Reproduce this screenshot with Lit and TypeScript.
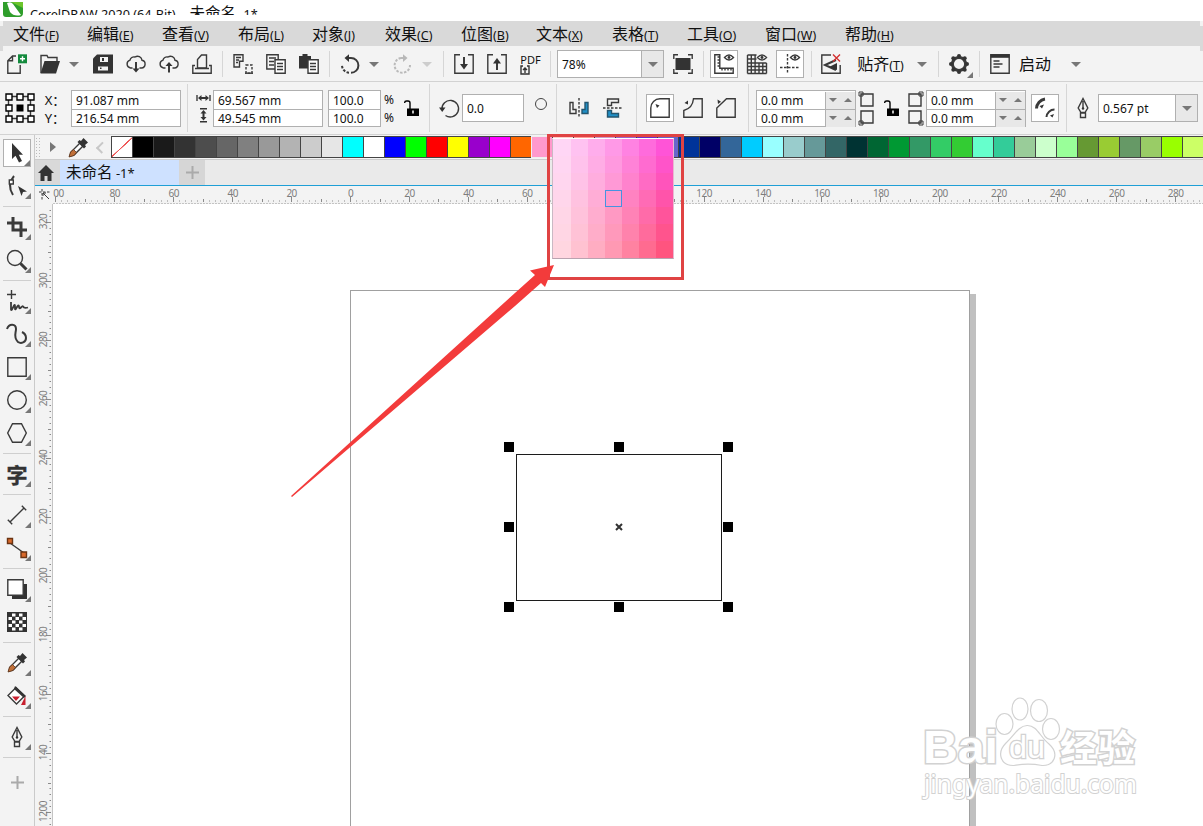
import { css, html, LitElement, svg, type SVGTemplateResult } from "lit";
import { customElement, property } from "lit/decorators.js";
import { classMap } from "lit/directives/class-map.js";
import { styleMap } from "lit/directives/style-map.js";


const MENUS: [string, string][] = [
    ["文件", "F"], ["编辑", "E"], ["查看", "V"], ["布局", "L"], ["对象", "J"], ["效果", "C"],
    ["位图", "B"], ["文本", "X"], ["表格", "T"], ["工具", "O"], ["窗口", "W"], ["帮助", "H"],
];

const PALETTE = [
    "000000", "1a1a1a", "333333", "4d4d4d", "666666", "808080", "999999", "b3b3b3", "cccccc", "e6e6e6",
    "00ffff", "ffffff", "0000ff", "00ff00", "ff0000", "ffff00", "9900cc", "ff00ff", "ff6600", "ff99cc",
    "ffcccc", "ff9999", "cc99cc", "9966cc", "6633cc", "6666cc", "003399", "000066", "336699", "00ccff",
    "99ffff", "99cccc", "669999", "336666", "003333", "006633", "009933", "339966", "33cc66", "33cc33",
    "66ffcc", "33cc99", "99cc99", "ccffcc", "99ff99", "669933", "99cc33", "669966", "99cc66", "99ff00",
    "ccff66",
];

// "-" is a divider
const TOOLS = [
    "pick", "shape", "-", "crop", "zoom", "-", "freehand", "artistic", "rect", "ellipse", "polygon", "-",
    "text", "-", "dimension", "connector", "-", "shadow", "checker", "-", "dropper", "fill", "-", "pen", "-",
];
const NO_FLYOUT = ["checker"];

const ICONS: Record<string, SVGTemplateResult> = {
    newDoc: svg`<path d="M9 2H5.500L.8 6.700V19.200H13.200V11M5.500 2V6.700H.8"/><path class="green" d="M11 .3h9v9h-9z"/><path class="white" d="M15.500 2.300v5M13 4.800h5"/>`,
    open: svg`<path d="M1 19V1.500h6l1 2h9V7"/><path class="solid" d="M.5 19.500 4.500 7H20l-4 12.500z"/>`,
    save: svg`<path class="solid" d="M4 .5h16v19H0V4.500z"/><path class="paper" d="M7 3h8v5H7zM5 12.500h10v4H5z"/><path class="solid" d="M9 4h2v3H9zM7 13.500h1.500v1.500H7z"/>`,
    cloudDown: svg`<path d="M6.500 14H4.500a4 4 0 0 1-.5-7.800A4 4 0 0 1 9 3a4.500 4.500 0 0 1 7 3.300A3.900 3.900 0 0 1 15.500 14H13.500"/><path class="thick" d="M10 8v8"/><path class="solid" d="m6.500 14.500 3.500 4 3.500-4z"/>`,
    cloudUp: svg`<path d="M6.500 14H4.500a4 4 0 0 1-.5-7.800A4 4 0 0 1 9 3a4.500 4.500 0 0 1 7 3.300A3.900 3.900 0 0 1 15.500 14H13.500"/><path class="thick" d="M10 11v7.500"/><path class="solid" d="m6.500 12 3.500-4 3.500 4z"/>`,
    print: svg`<path d="M5.500 14V5.500L9.500 1h5v13z"/><path d="M3 11.500H.8v7.700h18.400v-7.700H17M3 14.500h14"/>`,
    cut: svg`<path d="M1 13V.8h9v6.500H6.500V13zM3 3.500h5M3 6h3M3 8.500h2"/><path class="dash" d="M13 11h6v8.200h-6z"/><path d="M12 19.200h8"/>`,
    copy: svg`<path d="M9 15H.8V.8h11.400V5M3 4h7M3 7.500h5M3 11h5"/><path class="box" d="M9 5.800h10.200v13.400H9z"/><path d="M11 9.500h6M11 12.500h6M11 15.500h6"/>`,
    paste: svg`<path class="solid" d="M0 2h3.500V0h5v2H12v3H9v9.500H0z"/><path class="box" d="M9 5.800h10.200v13.400H9z"/><path d="M11 9.500h6M11 12.500h6M11 15.500h6"/>`,
    undo: svg`<path class="thick" d="M8 4h3a7.300 7.300 0 1 1 0 14.800"/><path class="solid" d="M9 .2V8L4.500 4z"/><path class="dash thick" d="M9 18.700A7.400 7.400 0 0 1 2 11"/>`,
    redo: svg`<path class="thick" d="M12 4H9"/><path class="solid" d="M11 .2V8l4.500-4z"/><path class="dash thick" d="M9 4a7.300 7.300 0 0 0 2 14.600 7.400 7.400 0 0 0 7-7.600"/>`,
    importIcon: svg`<path d="M6 .8H.8v18.400h18.400V.8H14"/><path class="thick" d="M10 3v9"/><path class="solid" d="m6 10 4 5.500L14 10z"/>`,
    exportIcon: svg`<path d="M6 .8H.8v18.400h18.400V.8H14"/><path class="thick" d="M10 8v8"/><path class="solid" d="m6 9.500 4-5.500 4 5.500z"/>`,
    fullScreen: svg`<path d="M.8 5V.8H5M15 .8h4.200V5M19.200 15v4.200H15M5 19.200H.8V15"/><path class="solid" d="M2.500 4h15v12h-15z"/>`,
    rulers: svg`<path d="M.8.800h5v13.400h13.400v5H.8zM3.500 3h2M3.500 6h2M3.500 9h2M3.500 12h2M8 14v2.500M11 14v2.500M14 14v2.500M17 14v2.500"/><path d="M10.500 3.500q4.500-5 9 0-4.500 5-9 0z"/><circle class="solid" cx="15" cy="3.500" r="1.400"/>`,
    grid: svg`<path d="M.5 1h9M.5 5h9M.5 9h19M.5 12.500h19M.5 16h19M.5 19.500h19M.5 1v18.500M4.300 1v18.500M8.100 1v18.500M12 9v10.500M15.800 9v10.500M19.500 9v10.500"/><path d="M10.500 3.500q4.500-5 9 0-4.500 5-9 0z"/><circle class="solid" cx="15" cy="3.500" r="1.400"/>`,
    guides: svg`<path class="dash" d="M7.500 0v20M0 13.500h20"/><path d="M10.500 3.500q4.500-5 9 0-4.500 5-9 0z"/><circle class="solid" cx="15" cy="3.500" r="1.400"/>`,
    snapOff: svg`<path d="M10 1H.8v18.200h18.400V11"/><path class="thick" d="m15 6-11 5 11 5"/><path class="solid" d="m8 13 8-4v7z"/><path class="red" d="m12 .5 7 7M19 .5l-7 7"/>`,
    gear: svg`<circle class="heavy" cx="10" cy="10" r="6.600"/><g class="solid"><circle cx="10" cy="2" r="2"/><circle cx="10" cy="18" r="2"/><circle cx="2" cy="10" r="2"/><circle cx="18" cy="10" r="2"/><circle cx="4.300" cy="4.300" r="2"/><circle cx="15.700" cy="4.300" r="2"/><circle cx="4.300" cy="15.700" r="2"/><circle cx="15.700" cy="15.700" r="2"/></g>`,
    launch: svg`<path d="M.8.800h18.400v18.400H.8z"/><path class="solid" d="M.5.500h19v3.300h-19z"/><path d="M3.500 7h6M3.500 10h9M3.500 13h6"/>`,
    lock: svg`<path class="ink" d="M3.700 5V4.500Q3.700 3 5.500 3H7Q9 3 9 5V11"/><path class="black" d="M6 10.500h12V18H6z"/><path class="paper" d="M11.200 12.500h1.600v3h-1.600z"/>`,
    rotate: svg`<path d="M4 11.500A8.300 8.300 0 1 1 7.500 17.500"/><path class="solid" d="M1 9.500h6.500L4.200 14z"/>`,
    mirrorH: svg`<path d="M1 4.500h3v7h3v4H1z"/><path class="blue" d="M19 4.500h-3v7h-3v4h6z"/><path class="dash" d="M10 0v20"/>`,
    mirrorV: svg`<path d="M15.500 1h-11v6.500h4v-3h7z"/><path class="blue" d="M15.500 19h-11v-6.500h4v3h7z"/><path class="dash" d="M0 10h20"/>`,
    cornerRound: svg`<path d="M.8 19.200V10A9.200 9.200 0 0 1 10 .8h9.200v18.400z"/><path class="solid" d="m5.500 6 4 1.500L7 10z"/>`,
    cornerScallop: svg`<path d="M.8 19.200V12.500Q9.500 10.500 10.500.800h8.700v18.400z"/><path class="solid" d="m1.500 5 3.500-2.500v4z"/>`,
    cornerChamfer: svg`<path d="M.8 19.200V10L10.500.800h8.700v18.400z"/><path class="solid" d="m1.500 1.500 3.500 2.200L2 6z"/>`,
    relative: svg`<path class="heavy" d="M1.500 10.500A10 10 0 0 1 10 1"/><path class="solid" d="m4.500 8 4.500-1.500-2 4z"/><path class="thick" d="M11.500 19a8 8 0 0 1 8-7.500"/><path class="solid" d="m15 17.500 4-1.500-1.500 3.500z"/>`,
    pen: svg`<path d="M10 .5 5.200 10 8 14.500h4l2.800-4.500zM10 3v7.500M7.500 15h5v4.500h-5z"/><circle class="solid" cx="10" cy="10.500" r="1.200"/>`,
    pick: svg`<path class="solid" d="M5 0v16l3.500-3.200L12 19.500l3-1.500-3.200-6.200H16z"/>`,
    shape: svg`<path class="thick" d="M7 0Q-.5 9 6 19"/><path class="box" d="M2.300 4h4v4h-4z"/><path class="solid" d="m11 10 9 5.500-4 .5-1.500 4z"/>`,
    crop: svg`<path class="heavy" d="M6 0v13h14M0 6h14v14"/>`,
    zoom: svg`<circle cx="8" cy="8" r="7.500"/><path class="heavy" d="m13.500 13.500 6 6"/>`,
    freehand: svg`<path d="M4.500 -1v9M0 3.500h9"/><path class="squiggle" d="M4 11v7.500q0 1 1 0l2-4q1-1.500 1 1v2.500q.5 1 2-2t2-.5q0 3 2 1t2-1q1 2 5 1"/>`,
    artistic: svg`<path class="thick" d="M0 5C2-1 9-.5 9 5c0 4-3 8 2 13 3 2 8 .5 8-4 0-3-2-5-4-6"/>`,
    rect: svg`<path d="M.8.800h18.400v18.400H.8z"/>`,
    ellipse: svg`<circle cx="10" cy="10" r="9.300"/>`,
    polygon: svg`<path d="M5.500.800h9L19.300 10l-4.800 9.200h-9L.7 10z"/>`,
    dimension: svg`<path d="M3 17 17 3M.8 14.800l4.400 4.400M14.800.800l4.400 4.400"/>`,
    connector: svg`<path d="m3 5 14 10"/><path class="orange" d="M.5.500h5v5h-5zM14 14h5.500v5.500H14z"/>`,
    shadow: svg`<path class="solid" d="M5 5h15v15H5z"/><path class="box" d="M.8.800h15.400v15.400H.8z"/>`,
    checker: svg`<path class="solid" d="M0 0h20v20H0z"/><path class="checks" d="M5 3h12M5 10h12M5 17h12"/><path class="checks" d="M1.500 6.500h18M1.500 13.500h18"/>`,
    dropper: svg`<path class="box" d="m2 18 1-4 9-9 3 3-9 9z"/><path class="rust" d="m1 19 1.500-5 3-2.500 3 3L6 17.500z"/><path class="solid" d="m9.500 4 2-2 1.500 1 2.500-3 4.500 4.500L17 7l1 1.500-2 2z"/>`,
    fill: svg`<path class="box" d="M9 1.500 17.500 10 9.500 18 1 9.500z"/><path class="solid" d="m8 0 11 10-2 2L7 3z"/><path class="crimson" d="M5 10.500h8L9 15zM18.500 10v9H14z"/>`,
    home: svg`<path class="solid" d="M8 0 0 8h2.500v8h4v-5h3v5h4V8H16z"/>`,
    anchor: svg`<path d="M3.500 3.500h22v22h-22z"/><path class="box ink" d="M1 1h6v6H1zM12 1h6v6h-6zM23 1h6v6h-6zM1 12h6v6H1zM23 12h6v6h-6zM1 23h6v6H1zM12 23h6v6h-6zM23 23h6v6h-6z"/><path class="black" d="M11.500 11.500h7v7h-7z"/>`,
    sizes: svg`<path d="M1 1v6M14 1v6"/><path class="solid" d="m2 4 3.500-3v2h4V1L13 4 9.500 7V5h-4v2zM4 14h7v1.500H4zM4 27h7v1.500H4zM7.500 16l3 3.500h-2v3.500h2l-3 3.500-3-3.500h2V19.500h-2z"/>`,
    cornersLeft: svg`<path d="M3 3h12v12H3zM3 20h12v12H3z"/><path class="thin" d="M1 1h4v4H1zM1 30h4v4H1z"/>`,
    cornersRight: svg`<path d="M1 3h12v12H1zM1 20h12v12H1z"/><path class="thin" d="M11 1h4v4h-4zM11 30h4v4h-4z"/>`,
    cornerTicks: svg`<path class="thin dash" d="M0 3h11M3 0v11"/><path class="thin" d="m4 4 6 6M4 7V4h3"/>`,
    plus: svg`<path class="faint" d="M7.500 1v13M1 7.500h13"/>`,
};


@customElement("cd-icon")
export class CdIcon extends LitElement {

    @property()
    name = "";

    @property({ type: Number })
    width = 20;

    @property({ type: Number })
    height = 20;

    static styles = css`
        :host {
            display: block;
            line-height: 0;
            flex: none;
        }

        svg {
            fill: none;
            stroke: #3a3a3a;
            stroke-width: 1.4;
            overflow: visible;
        }

        .solid { fill: #333; stroke: none; }
        .black { fill: #000; stroke: none; }
        .paper { fill: #f3f3f3; stroke: none; }
        .box { fill: #fff; }
        .ink { stroke: #000; }
        .green { fill: #138a3d; stroke: none; }
        .white { stroke: #fff; }
        .faint { stroke: #aaa; stroke-width: 2; }
        .red { stroke: #d32f2f; }
        .crimson { fill: #c8202f; stroke: none; }
        .blue { fill: #1f8fc6; stroke: #24556e; }
        .orange { fill: #d9692b; stroke: #6b3413; }
        .rust { fill: #c0703a; stroke: #5c341a; stroke-width: .8; }
        .thin { stroke-width: 1; }
        .thick { stroke-width: 2; }
        .heavy { stroke-width: 3; }
        .squiggle { stroke-width: 1.800; }
        .dash { stroke-dasharray: 2.500 1.500; }
        .checks { stroke: #fff; stroke-width: 3; stroke-dasharray: 3.500 3.500; }
    `;

    render() {
        return html`<svg width=${this.width} height=${this.height} viewBox="0 0 ${this.width} ${this.height}">${ICONS[this.name]}</svg>`;
    }
}


@customElement("cd-ruler")
export class CdRuler extends LitElement {

    @property({ type: Boolean })
    vertical = false;

    static styles = css`
        :host {
            display: block;
            overflow: hidden;
            line-height: 0;
            background: #f3f3f3;
        }

        svg {
            fill: none;
            stroke: #8a8a8a;
        }

        text {
            font: 10px "Noto Sans", sans-serif;
            letter-spacing: -.5px;
            fill: #7d7d7d;
            stroke: none;
            text-anchor: middle;
        }
    `;

    render() {
        return this.vertical ? this._renderVertical() : this._renderHorizontal();
    }

    // 58.93px on screen is 20 document units
    private _renderHorizontal() {
        const minor = Array.from({ length: 200 }, (_, i) => 2.9 + i * 5.893);
        return html`
            <svg width="1150" height="18">
                ${minor.map((x, i) => svg`<path d="M${Math.round(x - .5) + .5} ${i % 10 === 0 ? 11 : i % 5 === 0 ? 13 : 14.5}V${i % 5 === 0 ? 16 : 15.5}"/>`)}
                <path d="M0 17.500H1150" stroke="#c4c4c4" stroke-dasharray="2 1"/>
                ${Array.from({ length: 20 }, (_, i) => svg`<text x=${2.9 + i * 58.93} y="10.500">${Math.abs(i * 20 - 100)}</text>`)}
            </svg>
        `;
    }

    private _renderVertical() {
        const minor = Array.from({ length: 108 }, (_, i) => 18 - 11.8 + i * 5.9);
        return html`
            <svg width="18" height="622">
                ${minor.map((y, i) => svg`<path d="M${(i + 8) % 10 === 0 ? 11 : (i + 3) % 5 === 0 ? 13 : 14.5} ${Math.round(y) + .5}H16"/>`)}
                <path d="M17.500 0V622" stroke="#c4c4c4"/>
                ${Array.from({ length: 11 }, (_, i) => svg`<text transform="translate(11.500 ${17.5 + i * 59}) rotate(-90)">${i === 10 ? "1200" : 320 - i * 20}</text>`)}
            </svg>
        `;
    }
}


@customElement("app-root")
export class AppRoot extends LitElement {

    static styles = css`
        :host {
            display: flex;
            flex-direction: column;
            position: relative;
            width: 1203px;
            height: 826px;
            overflow: hidden;
            background: #f3f3f3;
            color: #111;
            font: 12px "Noto Sans", "Noto Sans CJK SC", sans-serif;
        }

        * { box-sizing: border-box; }

        .title {
            display: flex;
            gap: 7px;
            height: 21px;
            padding: 2px 3px 0;
            background: #fff;
            .caption {
                height: 13px;
                padding-top: 2px;
                overflow: hidden;
                line-height: 18px;
                font-size: 12.700px;
                white-space: pre;
            }
            .name { font-size: 15.500px; }
        }

        .menu {
            position: relative;
            display: grid;
            grid-template-columns: 74px 75px 76px 74px 73px 76px 75px 76px 75px 78px 80px 60px;
            align-items: center;
            height: 25px;
            margin: 0 3px;
            padding: 0 0 2px 10px;
            background: #d9d9d9;
            font-size: 16px;
            white-space: nowrap;
            &::before, &::after {
                content: "";
                position: absolute;
                top: 5px;
                width: 3px;
                height: 25px;
                background: #d9d9d9;
            }
            &::before { left: -3px; }
            &::after { right: -3px; }
        }

        .key { font-size: 12.500px; }

        .bar {
            display: grid;
            align-items: center;
            justify-items: center;
            border-bottom: 1px solid #d2d2d2;
            white-space: nowrap;
        }

        .standard {
            height: 36px;
            padding-top: 1px;
            grid-template-columns: 34px 32px 16px 42px 24px 42px 24px 16px 26px 40px 26px 14px 28px 20px 36px 14px 18px 24px 42px 25px 14px 107px 38px 2px 40px 26px 40px 2px 38px 61px 22px 10px 32px 8px 34px 36px 46px;
        }

        .property {
            height: 53px;
            grid-template-columns: 39px 32px 110px 12px 20px 110px 58px 16px 28px 8px 29px 62px 30px 4px 42px 26px 20px 28px 38px 28px 16px 100px 20px 30px 20px 100px 38px 4px 30px 100px;
        }

        .sep {
            width: 1px;
            height: 26px;
            background: #d6d6d6;
        }
        .property .sep { height: 48px; }

        .caret {
            width: 0;
            border: 5px solid transparent;
            border-top-color: #777;
            border-bottom: 0;
        }
        .faded { opacity: .3; }
        .large {
            padding-bottom: 2px;
            font-size: 16px;
        }

        .pdf {
            display: flex;
            flex-direction: column;
            font-size: 11px;
            line-height: 11px;
        }

        .toggle {
            display: grid;
            place-items: center;
            width: 28px;
            height: 28px;
            border: 1px solid #b0b0b0;
            background: #fff;
        }

        .field {
            display: flex;
            align-items: center;
            justify-content: space-between;
            width: 100%;
            height: 28px;
            padding-left: 4px;
            border: 1px solid #b0b0b0;
            background: #fff;
            .drop {
                display: grid;
                place-items: center;
                width: 22px;
                height: 26px;
                border-left: 1px solid #b0b0b0;
                background: #e8e8e8;
            }
        }

        .pair {
            width: 100%;
            height: 37px;
            border: 1px solid #b0b0b0;
            background: #fff;
            div {
                display: flex;
                justify-content: space-between;
                align-items: center;
                height: 18px;
                padding: 1px 0 0 4px;
            }
            div + div {
                padding-top: 0;
                border-top: 1px solid #b0b0b0;
            }
        }
        .pair.scale {
            width: 53px;
            justify-self: end;
        }

        .spin {
            display: flex;
            align-items: center;
            justify-content: space-around;
            width: 30px;
            height: 100%;
            border-left: 1px solid #b0b0b0;
            background: #e8e8e8;
            i {
                border: 4px solid transparent;
                border-bottom: 0;
                border-top-color: #777;
            }
            i + i { transform: rotate(180deg); }
        }

        .labels {
            line-height: 18px;
            padding-top: 1px;
            &.axis { font-size: 13px; }
        }
        .circle {
            width: 12px;
            height: 12px;
            margin: -8px 0 0 4px;
            border: 1.500px solid #444;
            border-radius: 50%;
        }

        .body {
            flex: 1;
            display: grid;
            grid-template-columns: 35px 1fr;
            min-height: 0;
        }

        .tools {
            display: flex;
            flex-direction: column;
            padding: 1px 0 0 3px;
            border-right: 1px solid #cacaca;
            hr {
                width: 28px;
                height: 1px;
                margin: 3.500px 0;
                border: 0;
                background: #cfcfcf;
            }
        }

        .tool {
            position: relative;
            display: grid;
            place-items: center;
            width: 28px;
            height: 33px;
            &.active {
                height: 28px;
                margin: 3px 0 2px;
                border: 1px solid #b0b0b0;
                background: #fff;
            }
            &.flyout::after {
                content: "";
                position: absolute;
                right: 0;
                bottom: 3px;
                border: 3px solid #777;
                border-top-color: transparent;
                border-left-color: transparent;
            }
            &.active::after { bottom: 0; }
        }
        .glyph {
            font: bold 21px "Noto Sans CJK SC", sans-serif;
            line-height: 24px;
            color: #333;
            -webkit-text-stroke: .5px #333;
        }
        .plus { height: 43px; }

        .main {
            display: grid;
            grid-template-rows: 24px 27px 1fr;
            min-width: 0;
            min-height: 0;
        }

        .palette {
            display: flex;
            align-items: center;
            overflow: hidden;
            .grip {
                width: 8px;
                height: 21px;
                background: radial-gradient(#bbb 0.7px, transparent 1px) 0 0 / 3px 3px;
            }
            .play {
                margin: 0 12px 0 9px;
                border: 5px solid transparent;
                border-left: 6px solid #777;
                border-right: 0;
            }
            .back {
                width: 9px;
                height: 9px;
                margin: 0 5px 0 11px;
                border: solid #c8c8c8;
                border-width: 0 0 2px 2px;
                transform: rotate(45deg);
            }
        }

        .swatch {
            flex: none;
            width: 21px;
            height: 22px;
            border: 1px solid #444;
            border-width: 1px 0 1px 1px;
            &.none { background: linear-gradient(137deg, #fff 48%, #e55 49%, #e55 52%, #fff 53%); }
        }
        .swatch.hot { border-color: #eee; }

        .tabs {
            display: flex;
            border-top: 1px solid #ccc;
            border-bottom: 1px solid #1f9fd6;
            background: #eaeaea;
            div {
                display: grid;
                place-items: center;
            }
            .home {
                width: 25px;
                padding-right: 3px;
                background: #d9d9d9;
            }
            .doc {
                width: 119px;
                justify-content: start;
                padding: 0 0 2px 6px;
                background: #cee1ff;
                font-size: 15.500px;
                white-space: pre;
            }
            .add {
                width: 26px;
                background: #d6d6d6;
            }
            small { font-size: 13px; }
        }

        .view {
            display: grid;
            grid-template: 18px 1fr / 18px 1fr;
            min-height: 0;
            min-width: 0;
            .corner { padding: 3px 0 0 4px; }
        }

        .canvas {
            position: relative;
            background: #fff;
            overflow: hidden;
        }

        .page {
            position: absolute;
            left: 297px;
            top: 86px;
            width: 620px;
            height: 600px;
            border: 1px solid #a0a0a0;
            box-shadow: 6px 4px #c0c0c0;
            background: #fff;
        }

        .object {
            position: absolute;
            left: 463px;
            top: 250px;
            width: 206px;
            height: 147px;
            border: 1px solid #1c1c1c;
        }

        .handles {
            position: absolute;
            left: 451px;
            top: 238px;
            width: 229px;
            height: 170px;
            display: grid;
            grid-template-columns: repeat(3, 10px);
            grid-template-rows: repeat(3, 10px);
            place-content: space-between;
            i { background: #000; }
            svg {
                margin: 1px;
                stroke: #333;
                stroke-width: 2;
            }
        }

        .shades {
            position: absolute;
            left: 552px;
            top: 138px;
            display: grid;
            grid-template-columns: 18px repeat(6, 17px);
            grid-auto-rows: 17px;
            border: 1px solid;
            border-color: #fff #e8b8d0 #b9a3b0 #c9b9c4;
            .current { border: 1px solid #4593e0; }
        }

        .frame {
            position: absolute;
            left: 547px;
            top: 134px;
            width: 137px;
            height: 146px;
            border: 3px solid #e04343;
        }

        .overlay {
            position: absolute;
            left: 0;
            top: 0;
            .arrow { fill: #f33b3b; }
        }

        .mark {
            fill: #fff;
            stroke: #d2d2d2;
            stroke-width: 1.2;
            text {
                font-family: "Noto Sans", "Noto Sans CJK SC", sans-serif;
                paint-order: stroke;
            }
            .brand { font: bold 46px "Liberation Sans", sans-serif; stroke-width: 3; }
            .du { font: 31px "Liberation Sans", sans-serif; stroke-width: 2.500; }
            .cn { font: bold 37px "Noto Sans CJK SC", sans-serif; stroke-width: 3; }
            .url { font-size: 25px; stroke-width: 2; }
        }
    `;

    render() {
        return html`
            <div class="title">
                <svg width="20" height="15" viewBox="0 0 20 15">
                    <path d="M0 0H20V11Q20 15 16 15H3Q0 15 0 12Z" fill="#2f9e2b"/>
                    <path d="M0 0H20V6L8 0Z" fill="#6cc52c"/>
                    <path d="M4 1Q8-1 10 2L18 13Q11 15 7 10Z" fill="#fff"/>
                </svg>
                <div class="caption">CorelDRAW 2020 (64-Bit) -  <span class="name">未命名</span> -1*</div>
            </div>
            <div class="menu">${MENUS.map(([label, key]) => html`<span>${label}${this._key(key)}</span>`)}</div>
            ${this._renderStandardBar()}
            ${this._renderPropertyBar()}
            <div class="body">
                <div class="tools">
                    ${TOOLS.map((tool) => this._renderTool(tool))}
                    <div class="tool plus">${this._icon("plus", 15, 15)}</div>
                </div>
                <div class="main">
                    <div class="palette">
                        <div class="grip"></div><div class="play"></div>
                        <cd-icon name="dropper" width="19" height="19"></cd-icon>
                        <div class="back"></div>
                        <div class="swatch none"></div>
                        ${PALETTE.map((c, i) => html`<div class=${classMap({ swatch: true, hot: i === 19 })} style=${styleMap({ backgroundColor: `#${c}` })}></div>`)}
                    </div>
                    <div class="tabs">
                        <div class="home"><cd-icon name="home" width="16" height="16"></cd-icon></div>
                        <div class="doc"><span>未命名<small> -1*</small></span></div>
                        <div class="add">${this._icon("plus", 15, 15)}</div>
                    </div>
                    <div class="view">
                        <div class="corner"><cd-icon name="cornerTicks" width="11" height="11"></cd-icon></div>
                        <cd-ruler></cd-ruler>
                        <cd-ruler vertical></cd-ruler>
                        ${this._renderCanvas()}
                    </div>
                </div>
            </div>
            ${this._renderShades()}
            <div class="frame"></div>
            <svg class="overlay" width="1203" height="826">
                <path class="arrow" d="M291 496 505 302 535 275 530 270.500 554 265 545 287 541 283 515 306 292 497Z"/>
                ${this._renderMark()}
            </svg>
        `;
    }

    private _key(key: string) {
        return html`<span class="key">(<u>${key}</u>)</span>`;
    }

    private _icon(name: string, width = 20, height = 20) {
        return html`<cd-icon name=${name} width=${width} height=${height}></cd-icon>`;
    }

    private _pair(a: string, b: string, spin = false, extra = "") {
        const arrows = spin ? html`<span class="spin"><i></i><i></i></span>` : "";
        return html`<div class="pair ${extra}"><div>${a}${arrows}</div><div>${b}${arrows}</div></div>`;
    }

    private _renderStandardBar() {
        const sep = html`<div class="sep"></div>`;
        const caret = html`<div class="caret"></div>`;
        return html`
            <div class="bar standard">
                ${this._icon("newDoc")}${this._icon("open")}${caret}
                ${["save", "cloudDown", "cloudUp", "print"].map((n) => this._icon(n))}${sep}
                ${["cut", "copy", "paste"].map((n) => this._icon(n))}${sep}
                ${this._icon("undo")}${caret}
                <div class="faded">${this._icon("redo")}</div><div class="caret faded"></div>${sep}
                ${this._icon("importIcon")}${this._icon("exportIcon")}
                <div class="pdf">PDF<svg width="10" height="10" fill="none" stroke="#333" stroke-width="1.4"><path d="M3 1H1v8h8V1H7M5 8V3M3 5l2-2 2 2"/></svg></div>${sep}
                <div class="field">78%<div class="drop">${caret}</div></div>
                ${this._icon("fullScreen")}${sep}
                <div class="toggle">${this._icon("rulers")}</div>
                ${this._icon("grid")}
                <div class="toggle">${this._icon("guides")}</div>${sep}
                ${this._icon("snapOff")}
                <span class="large">贴齐${this._key("T")}</span>${caret}${sep}
                <div class="tool flyout">${this._icon("gear")}</div>${sep}
                ${this._icon("launch")}
                <span class="large">启动</span>${caret}
            </div>
        `;
    }

    private _renderPropertyBar() {
        const sep = html`<div class="sep"></div>`;
        return html`
            <div class="bar property">
                ${this._icon("anchor", 30, 30)}
                <div class="labels axis">X：<br>Y：</div>
                ${this._pair("91.087 mm", "216.54 mm")}${sep}
                ${this._icon("sizes", 15, 29)}
                ${this._pair("69.567 mm", "49.545 mm")}
                ${this._pair("100.0", "100.0", false, "scale")}
                <div class="labels">%<br>%</div>
                ${this._icon("lock")}${sep}
                ${this._icon("rotate")}
                <div class="field">0.0</div>
                <div class="circle"></div>${sep}
                ${this._icon("mirrorH")}${this._icon("mirrorV")}${sep}
                <div class="toggle">${this._icon("cornerRound")}</div>
                ${this._icon("cornerScallop")}${this._icon("cornerChamfer")}${sep}
                ${this._pair("0.0 mm", "0.0 mm", true)}
                ${this._icon("cornersLeft", 16, 35)}
                ${this._icon("lock")}
                ${this._icon("cornersRight", 16, 35)}
                ${this._pair("0.0 mm", "0.0 mm", true)}
                <div class="toggle">${this._icon("relative")}</div>${sep}
                ${this._icon("pen")}
                <div class="field">0.567 pt<div class="drop"><div class="caret"></div></div></div>
            </div>
        `;
    }

    private _renderTool(tool: string) {
        if (tool === "-") {
            return html`<hr>`;
        }
        const classes = { tool: true, active: tool === "pick", flyout: !NO_FLYOUT.includes(tool) };
        return html`<div class=${classMap(classes)}>${tool === "text" ? html`<span class="glyph">字</span>` : this._icon(tool)}</div>`;
    }

    private _renderCanvas() {
        return html`
            <div class="canvas">
                <div class="page"></div>
                <div class="object"></div>
                <div class="handles">
                    <i></i><i></i><i></i>
                    <i></i><svg width="8" height="8"><path d="m1 1 6 6M7 1 1 7"/></svg><i></i>
                    <i></i><i></i><i></i>
                </div>
            </div>
        `;
    }

    private _renderShades() {
        const light = [92, 88, 84, 80, 75.5, 71, 66.5];
        const hues = [314, 319, 324, 330, 335, 340, 345];
        return html`
            <div class="shades">
                ${hues.map((h, row) => light.map((l, col) => html`
                    <div class=${classMap({ current: row === 3 && col === 3 })} style=${styleMap({ backgroundColor: `hsl(${h} 100% ${l}%)` })}></div>
                `))}
            </div>
        `;
    }

    private _renderMark() {
        return svg`
            <g class="mark">
                <ellipse cx="1004.500" cy="724" rx="8.500" ry="10.500"/>
                <ellipse cx="1020" cy="709" rx="8" ry="11"/>
                <ellipse cx="1039" cy="710.500" rx="8.500" ry="11"/>
                <ellipse cx="1051" cy="729" rx="8.500" ry="10.500"/>
                <path d="M1027 725.500C1037 725 1040 737 1049 744 1060 754 1054 766 1042 765.500 1034 764 1022 764 1014 765.500 1001 766 996 753 1006 743 1014 736 1018 726 1027 725.500Z"/>
                <text class="brand" x="923" y="763" textLength="75" lengthAdjust="spacingAndGlyphs">Bai</text>
                <text class="du" x="1009" y="758" textLength="36" lengthAdjust="spacingAndGlyphs">du</text>
                <text class="cn" x="1060" y="762" textLength="75">经验</text>
                <text class="url" x="924" y="793" textLength="213" lengthAdjust="spacingAndGlyphs">jingyan.baidu.com</text>
            </g>
        `;
    }
}
